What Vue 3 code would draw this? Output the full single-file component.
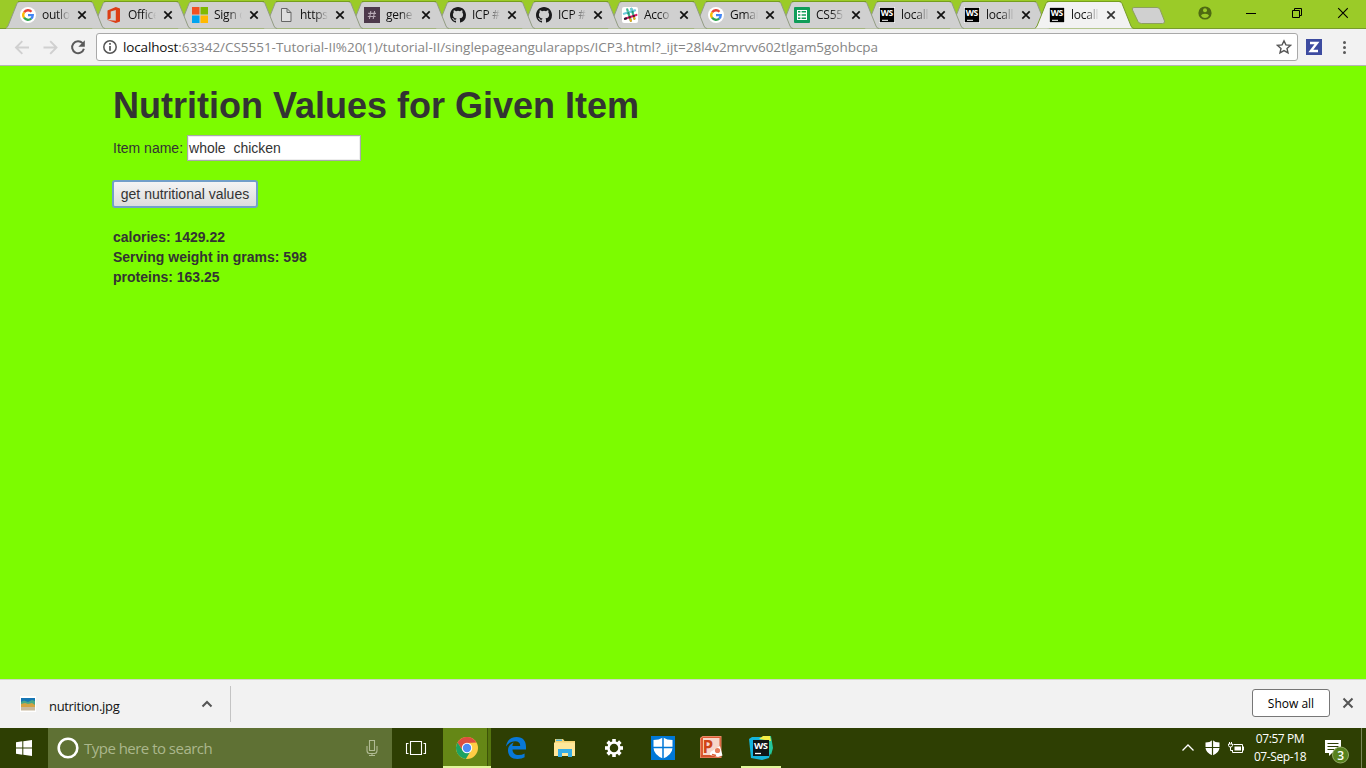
<script setup>
const titles = [
  ['google', 'outlo'], ['office', 'Office'], ['ms', 'Sign o'], ['file', 'https'], ['hash', 'gene'],
  ['github', 'ICP #'], ['github', 'ICP #'], ['slack', 'Acco'], ['google', 'Gmai'], ['sheet', 'CS55'],
  ['ws', 'locall'], ['ws', 'locall'], ['ws', 'locall'],
]
const tabs = titles.map(([icon, text], i) => ({ icon, text, active: i === 12, narrow: i > 8, z: i === 12 ? 30 : 20 - i }))
</script>

<template>
  <div class="screen">
    <header class="strip">
      <div class="tabs">
        <div v-for="(t, i) in tabs" :key="i" class="tab" :class="{ active: t.active, narrow: t.narrow }" :style="{ zIndex: t.z }">
          <svg class="shape" width="100" height="29" viewBox="0 0 100 29">
            <path d="M0 28.5 L2 26 L11 3.5 Q12 1.5 14 1.5 H84 Q86 1.5 87 3.5 L96 26 Q97 28.5 99 28.5Z" :fill="t.active ? '#f2f2f2' : '#d0d0d0'" />
            <path d="M0 28.5 L2 26 L11 3.5 Q12 1.5 14 1.5 H84 Q86 1.5 87 3.5 L96 26 Q97 28.5 99 28.5" fill="none" :stroke="t.active ? '#779b2b' : '#929c83'" />
            <path d="M12 1.5H86" stroke="#769f1d" />
          </svg>
          <svg class="fav" width="16" height="16" viewBox="0 0 16 16">
            <g v-if="t.icon === 'google'" fill="none" stroke-width="2.3">
              <circle cx="8" cy="8" r="8" fill="#fff" />
              <path d="M4.1 5.3A4.8 4.8 0 0 1 11.5 4.7" stroke="#ea4335" />
              <path d="M4.1 5.3A4.8 4.8 0 0 0 4.1 10.8" stroke="#fbbc05" />
              <path d="M4.1 10.7A4.8 4.8 0 0 0 11.2 11.6" stroke="#34a853" />
              <path d="M8 8.1H12.8Q12.8 10.4 11.1 11.6" stroke="#4285f4" />
            </g>
            <path v-else-if="t.icon === 'office'" d="M1.5 3.6L9.8 0 14 1.4V14.5L9.8 16 1.5 13 9.8 13.8V3.1L4.7 4.4V11.3L1.5 13Z" fill="#dc3e15" />
            <g v-else-if="t.icon === 'ms'">
              <path d="M0 0H7.5V7.5H0Z" fill="#f25022" /><path d="M8.5 0H16V7.5H8.5Z" fill="#7fba00" />
              <path d="M0 8.5H7.5V16H0Z" fill="#00a4ef" /><path d="M8.5 8.5H16V16H8.5Z" fill="#ffb900" />
            </g>
            <path v-else-if="t.icon === 'file'" d="M3.5 1.5H9L13 5.5V14.5H3.5ZM9 1.5V5.5H13" fill="#dedede" stroke="#666" />
            <g v-else-if="t.icon === 'hash'">
              <path d="M0 0H16V16H0Z" fill="#4d394b" /><path d="M6.8 4L5.4 12M10.6 4L9.2 12M4.2 6.4H12M3.8 9.5H11.6" stroke="#b7a9b5" stroke-width="1.1" />
            </g>
            <path v-else-if="t.icon === 'github'" fill="#1b1b1d" d="M8 0C3.58 0 0 3.58 0 8c0 3.54 2.29 6.53 5.47 7.59.4.07.55-.17.55-.38 0-.19-.01-.82-.01-1.49-2.01.37-2.53-.49-2.69-.94-.09-.23-.48-.94-.82-1.13-.28-.15-.68-.52-.01-.53.63-.01 1.08.58 1.23.82.72 1.21 1.87.87 2.33.66.07-.52.28-.87.51-1.07-1.78-.2-3.64-.89-3.64-3.95 0-.87.31-1.59.82-2.15-.08-.2-.36-1.02.08-2.12 0 0 .67-.21 2.2.82a7.6 7.6 0 0 1 4 0c1.53-1.04 2.2-.82 2.2-.82.44 1.1.16 1.92.08 2.12.51.56.82 1.27.82 2.15 0 3.07-1.87 3.75-3.65 3.95.29.25.54.73.54 1.48 0 1.07-.01 1.93-.01 2.2 0 .21.15.46.55.38A8 8 0 0 0 16 8c0-4.42-3.58-8-8-8Z" />
            <g v-else-if="t.icon === 'slack'" fill="none" stroke-width="2.2" stroke-linecap="round">
              <rect width="16" height="16" rx="2" fill="#fff" />
              <path d="M5.2 2.3L8.9 13.8" stroke="#3eb991" /><path d="M9.4 1.8L12.4 11.8" stroke="#3eb991" />
              <path d="M1.900 6.800L13 3.400" stroke="#6ecadc" /><path d="M3 11.800L14.400 8" stroke="#e01765" />
              <path d="M9.400 1.800L9.800 3.200" stroke="#6ecadc" /><path d="M8.400 12.300L8.900 13.800M12.100 10.700L12.400 11.800" stroke="#e9a820" />
              <path d="M6.300 6L6.400 6.300M10.600 4.800L10.700 5" stroke="#249b77" />
              <path d="M7.500 10.300L7.800 10.200M11.700 9L11.900 8.900" stroke="#53202d" /><path d="M3 11.800L4 11.500" stroke="#251f32" />
            </g>
            <g v-else-if="t.icon === 'sheet'">
              <rect width="16" height="16" rx="1" fill="#0f9d58" /><path d="M3 3H13V13H3Z" fill="#fff" />
              <path d="M4 4.8H6.4M7.6 4.8H12M4 8H6.4M7.6 8H12M4 11.2H6.4M7.6 11.2H12" stroke="#0f9d58" stroke-width="1.5" />
            </g>
            <g v-else>
              <path d="M0 0H16V16H0Z" fill="#fff" /><path d="M.8 .8H15.2V15.2H.8Z" fill="#000" />
              <text x="1.8" y="9" class="wsfav" textLength="12.4">WS</text><path d="M3 13.3H9" stroke="#fff" />
            </g>
          </svg>
          <span class="tt">{{ t.text }}</span>
          <svg class="x" width="10" height="10" viewBox="0 0 10 10"><path d="M1.3 1.3L8.7 8.7M8.7 1.3L1.3 8.7" :stroke="t.active ? '#333' : '#111'" stroke-width="1.7" /></svg>
        </div>
      </div>
      <svg class="newtab" width="36" height="20" viewBox="0 0 36 20"><path d="M3 1.5H26Q28 1.5 29 3.5L33.500 15Q34 17.500 31.500 17.500H10.500Q8 17.500 7 15.500L1.500 4Q.5 1.500 3 1.500Z" fill="#d0d0d0" stroke="#8da05e" /></svg>
      <svg class="controls" width="150" height="28" viewBox="0 0 150 28">
        <circle cx="7" cy="13" r="6.6" fill="#4e6a12" /><circle cx="7" cy="10.300" r="2" fill="#9aca28" /><path d="M3 15.800Q3.500 13.800 7 13.800Q10.500 13.800 11 15.800Q9.500 18 7 18Q4.500 18 3 15.800Z" fill="#9aca28" />
        <path d="M48 13.500H58M94.500 10.500H101.500V17.500H94.500ZM96.500 10.500V8.500H103.500V15.500H101.500" fill="none" stroke="#000" />
        <path d="M140.200 8.200L149.800 17.800M149.800 8.200L140.200 17.800" stroke="#000" stroke-width="1.100" />
      </svg>
    </header>

    <nav class="toolbar">
      <svg width="96" height="36" viewBox="0 0 96 36" fill="none">
        <path d="M29 18.500H16M22.300 12.200L16 18.500L22.300 24.800M43.500 18.500H56.500M50.200 12.200L56.500 18.500L50.200 24.800" stroke="#d0d0d0" stroke-width="1.900" />
        <path d="M82.600 14.200A6 6 0 1 0 83.900 19.800" stroke="#5a5a5a" stroke-width="2" /><path d="M84.800 11.300V17.800H78.300Z" fill="#5a5a5a" />
      </svg>
      <div class="omni">
        <svg width="26" height="26" viewBox="0 0 26 26"><circle cx="13" cy="13" r="6.200" fill="none" stroke="#555" stroke-width="1.500" /><path d="M13 12V16.700M13 9V10.700" stroke="#555" stroke-width="1.700" /></svg>
        <span class="url"><b>localhost</b>:63342/CS5551-Tutorial-II%20(1)/tutorial-II/singlepageangularapps/ICP3.html?_ijt=28l4v2mrvv602tlgam5gohbcpa</span>
        <svg class="star" width="16" height="16" viewBox="0 0 16 16"><path d="M8 1.800L9.900 5.900L14.400 6.400L11 9.400L12 13.900L8 11.600L4 13.900L5 9.400L1.600 6.400L6.100 5.900Z" fill="none" stroke="#555" stroke-width="1.400" /></svg>
      </div>
      <svg width="68" height="36" viewBox="0 0 68 36">
        <path d="M8 10H24V26H8Z" fill="#3d4ba0" /><path d="M12 14H19L12.800 22H20" fill="none" stroke="#fff" stroke-width="2.400" />
        <circle v-for="y in [13.500, 18.500, 23.500]" :key="y" cx="46.500" :cy="y" r="1.500" fill="#5a5a5a" />
      </svg>
    </nav>

    <main class="page">
      <h1>Nutrition Values for Given Item</h1>
      <div class="row">Item name: <div class="input">whole&nbsp; chicken</div></div>
      <button>get nutritional values</button>
      <div class="results"><div>calories: 1429.22</div><div>Serving weight in grams: 598</div><div>proteins: 163.25</div></div>
    </main>

    <section class="downloads">
      <div class="dl">
        <svg width="16" height="16" viewBox="0 0 16 16"><path d="M0 0H16V16H0Z" fill="#fff" /><path d="M1 2H15V9H1Z" fill="#1676b4" /><path d="M1 6L4 4.500L8 6L12 4L15 5V10H1Z" fill="#48a889" /><path d="M1 8L5 7L8 8L12 7L15 9V14H1Z" fill="#d5a342" /><path d="M1 11H15V14.500H1Z" fill="#c9b99d" /></svg>
        <span>nutrition.jpg</span>
        <svg class="chev" width="12" height="8" viewBox="0 0 12 8"><path d="M1.500 6.500L6 2L10.500 6.500" fill="none" stroke="#555" stroke-width="2" /></svg>
      </div>
      <div class="showall"><span>Show all</span></div>
      <svg class="dlx" width="12" height="12" viewBox="0 0 12 12"><path d="M1.500 1.500L10.500 10.500M10.500 1.500L1.500 10.500" stroke="#555" stroke-width="2" /></svg>
    </section>

    <footer class="taskbar">
      <svg width="48" height="40" viewBox="0 0 48 40"><path d="M16 14.200L22.300 13.300V19.500H16ZM23.300 13.200L32 12V19.500H23.300ZM16 20.500H22.300V26.700L16 25.800ZM23.300 20.500H32V28L23.300 26.800Z" fill="#fff" /></svg>
      <div class="search">
        <svg width="36" height="40" viewBox="0 0 36 40"><circle cx="20" cy="20" r="9.300" fill="none" stroke="#fff" stroke-width="2.600" /></svg>
        <span>Type here to search</span>
        <svg class="mic" width="14" height="18" viewBox="0 0 14 18"><path d="M4.500 1.500H9.500V11.500H4.500ZM2 7V11.500Q2 14.500 4.500 14.500H9.500Q12 14.500 12 11.500V7M7 14.500V17M4 16.500H10" fill="none" stroke="#b1bb94" stroke-width="1.100" /></svg>
      </div>
      <svg width="51" height="40" viewBox="0 0 51 40"><path d="M18.500 13.500H29.500V26.500H18.500ZM16.500 15.500H14.500V25.500H16.500M31.500 15.500H33.500V25.500H31.500" fill="none" stroke="#fff" stroke-width="1.100" /></svg>
      <div class="app chrome">
        <svg width="48" height="40" viewBox="0 0 48 40">
          <circle cx="24" cy="20" r="11" fill="#ffcd45" />
          <path d="M14.500 14.500A11 11 0 0 1 33.500 14.500L24 15L20 23Z" fill="#dc4e41" /><path d="M14.500 14.500A11 11 0 0 0 22.800 31L28 22.500L20 23Z" fill="#1da261" />
          <circle cx="24" cy="20" r="5.200" fill="#fff" /><circle cx="24" cy="20" r="4.200" fill="#4c8bf5" />
        </svg>
      </div>
      <svg width="49" height="40" viewBox="0 0 49 40"><path d="M15 18.500C16 12 20 9 25.700 9C32 9 35 13 35 18.800V21.500H21.500C21.500 25 24 27 27.500 27Q31 27 33.600 25.500V29.200Q31 31 26.500 31C20.500 31 17 27.500 17 22.500C17 18.500 19.400 16 22.700 14.600Q21.600 16 21.400 18H29.200C29.200 14.800 27.400 13.300 24.200 13.300C20.700 13.300 17.400 15 15 18.500Z" fill="#0878d7" /></svg>
      <svg width="49" height="40" viewBox="0 0 49 40"><path d="M15 11H23L24.500 13H35V28H15Z" fill="#f6d473" /><path d="M14 14.500H35V28H14Z" fill="#ffe79a" /><path d="M16 11.500H22V13H16Z" fill="#4bb4df" /><path d="M18 29V21H32V29H28V25H22V29Z" fill="#37aee6" /></svg>
      <svg width="49" height="40" viewBox="0 0 49 40"><g transform="translate(25 20)"><path v-for="a in 8" :key="a" d="M-1.800-9H1.800V-5H-1.800Z" :transform="`rotate(${a * 45})`" fill="#fff" /><circle r="5.500" fill="none" stroke="#fff" stroke-width="2.500" /></g></svg>
      <svg width="49" height="40" viewBox="0 0 49 40"><path d="M13 8H37V32H13Z" fill="#0078d7" /><path d="M25 9.500Q29 12 34.500 12V20Q34 27 25 30.500Q16 27 15.500 20V12Q21 12 25 9.500Z" fill="#fff" /><path d="M25 9V31M15 19.500H35" stroke="#0078d7" stroke-width="1.500" /></svg>
      <svg width="49" height="40" viewBox="0 0 49 40"><path d="M13 10L15.500 8H34.500V30H13Z" fill="#e98a68" /><path d="M14 10.500L16 9H33.700V29.200H14Z" fill="#dd5b33" /><path d="M16 10H32.500V28H16Z" fill="#f7d6c9" /><path d="M14 27H33.700V29.200H14Z" fill="#d4522b" /><text x="15.500" y="25" class="pp">P</text><path d="M23 27Q22.500 23.500 26 22.500L33 18L35.500 27.500L31 29Z" fill="#fff" /><circle cx="30.500" cy="22.500" r="2.600" fill="#e67b59" /><path d="M25 26.500L29 27.500" stroke="#dd5b33" stroke-width="1.400" /></svg>
      <div class="app storm">
        <svg width="40" height="38" viewBox="0 0 40 38"><path d="M8 11L11 9 20 9 31 18 28 30 21 32 10 30Z" fill="#14b4dc" /><path d="M19 10L24 8H30L32 20L30 27Z" fill="#24c69b" /><path d="M18 11L22 8H29L30 13Z" fill="#f2ee44" /><path d="M12 12H28V28H12Z" fill="#101416" /><text x="13" y="21" class="wsbig" textLength="14">WS</text><path d="M14 25.500H20" stroke="#fff" stroke-width="1.300" /></svg>
      </div>
      <div class="tray">
        <svg width="78" height="40" viewBox="0 0 78 40"><path d="M12.500 22.500L18 17L23.500 22.500" fill="none" stroke="#fff" stroke-width="1.300" /><path d="M42.500 12Q45 14.500 49.500 14.500V20Q49 25 42.500 27.500Q36 25 35.500 20V14.500Q40 14.500 42.500 12Z" fill="#fff" /><path d="M42.500 12V28M35 19.500H50" stroke="#2e3f05" stroke-width="1.200" /><path d="M63.500 16.500H72.500V24.500H62.500V22M73.500 18.500V22.500" fill="none" stroke="#fff" /><path d="M64.500 18.500H71V22.500H64.500Z" fill="#fff" /><path d="M58.500 16V17.500Q58.500 19 60.500 19Q62.500 19 62.500 17.500V16ZM59.500 14V16M61.500 14V16M60.500 19V22.500H63" fill="none" stroke="#fff" /></svg>
        <div class="clock"><span>07:57 PM</span><span>07-Sep-18</span></div>
        <svg width="54" height="40" viewBox="0 0 54 40"><path d="M13 12H29V25H20L17 28V25H13Z" fill="#fff" /><path d="M15.500 15.500H26.500M15.500 18.500H26.500M15.500 21.500H22" stroke="#2e3f05" /><circle cx="28.500" cy="27" r="8" fill="#57811d" stroke="#92aa65" /><text x="25.300" y="31.500" class="badge">3</text><path d="M49.500 0V40" stroke="#7a8659" /></svg>
      </div>
    </footer>
  </div>
</template>

<style>
html, body { margin: 0; overflow: hidden; }
</style>

<style scoped>
* { box-sizing: border-box; }
svg { display: block; flex: none; }
.screen { width: 1366px; height: 768px; display: flex; flex-direction: column; font-family: "Open Sans", "Noto Sans", sans-serif; overflow: hidden; }
.strip { height: 29px; flex: none; background: #9bcb28; display: flex; border-bottom: 1px solid #779b2b; }
.tabs { display: flex; padding-left: 6px; width: 1131px; flex: none; }
.tab { position: relative; width: 86px; height: 29px; flex: none; display: flex; align-items: center; padding-left: 14px; }
.tab.narrow { width: 85px; }
.shape { position: absolute; left: 0; top: 0; }
.fav { position: relative; }
.tt { position: relative; width: 29px; margin-left: 6px; white-space: nowrap; font-size: 12px; line-height: 18px; color: #111; letter-spacing: -.25px; mask-image: linear-gradient(90deg, #000 50%, transparent 97%); }
.x { position: relative; margin-left: 6px; }
.newtab { margin-top: 6px; }
.controls { margin-left: 31px; }
.toolbar { height: 37px; flex: none; background: #f2f2f2; border-bottom: 1px solid #b5b5b5; display: flex; }
.omni { width: 1202px; height: 28px; margin-top: 4px; border: 1px solid #a9a9a9; border-radius: 3px; background: #fff; display: flex; align-items: center; }
.url { font-size: 13.5px; line-height: 20px; color: #858585; white-space: nowrap; letter-spacing: -.037px; }
.url b { font-weight: 400; color: #111; letter-spacing: -.15px; }
.star { margin: 0 5px 0 auto; }
.page { flex: 1; background: #7cfc00; padding: 20px 113px 0; font: 14px/20px "Liberation Sans", Arial, sans-serif; color: #333; }
h1 { margin: 0 0 10px; font-size: 36px; line-height: 39px; font-weight: 700; }
.row { display: flex; align-items: center; height: 26px; gap: 4px; white-space: nowrap; }
.input { width: 174px; height: 26px; border: 1px solid #a9a9a9; box-shadow: inset 0 0 0 1px #eee; background: #fff; padding: 2px 1px; }
button { display: block; width: 146px; height: 28px; margin: 19px 0 0 -1px; padding: 0; border: 2px solid #729fc9; border-radius: 3px; background: linear-gradient(#f4f4f4, #dcdcdc); color: #333; font: inherit; }
.results { margin-top: 19px; font-weight: 700; }
.downloads { height: 49px; flex: none; background: #f2f2f2; border-top: 1px solid #cfd6c7; display: flex; }
.dl { width: 231px; height: 36px; margin-top: 6px; border-right: 1px solid #c4c4c4; display: flex; align-items: center; padding: 0 17px 0 20px; font-size: 13px; color: #111; }
.dl span { margin: 3px 0 0 13px; letter-spacing: -.32px; }
.chev { margin-left: auto; }
.showall { width: 78px; height: 28px; margin: 9px 0 0 auto; border: 1px solid #777; border-radius: 3px; background: #fff; display: flex; align-items: center; justify-content: center; font-size: 12px; color: #000; }
.dlx { margin: 17px 12px 0; }
.taskbar { height: 40px; flex: none; background: #2e3f03; display: flex; }
.search { width: 344px; height: 40px; background: #5f7134; display: flex; align-items: center; color: #abb78c; font-size: 15px; }
.search span { letter-spacing: -.52px; }
.mic { margin: 0 13px 0 auto; }
.app { height: 40px; flex: none; }
.chrome { width: 48px; background: linear-gradient(90deg, #658716 44px, #3d5308 44px, #3d5308 45px, #55750f 45px); border-bottom: 2px solid #dff79a; }
.storm { width: 40px; margin-left: 5px; border-bottom: 2px solid #dff79a; }
.tray { margin-left: auto; display: flex; }
.clock { width: 64px; padding-top: 2px; font-size: 12px; line-height: 18px; color: #fff; display: flex; flex-direction: column; align-items: center; white-space: nowrap; letter-spacing: -.4px; }
.wsfav { font: 700 8.500px "Open Sans", sans-serif; fill: #fff; }
.wsbig { font: 700 9.500px "Open Sans", sans-serif; fill: #fff; }
.pp { font: 700 17px "Open Sans", sans-serif; fill: #cf4416; }
.badge { font: 600 12px "Open Sans", sans-serif; fill: #fff; }
</style>
